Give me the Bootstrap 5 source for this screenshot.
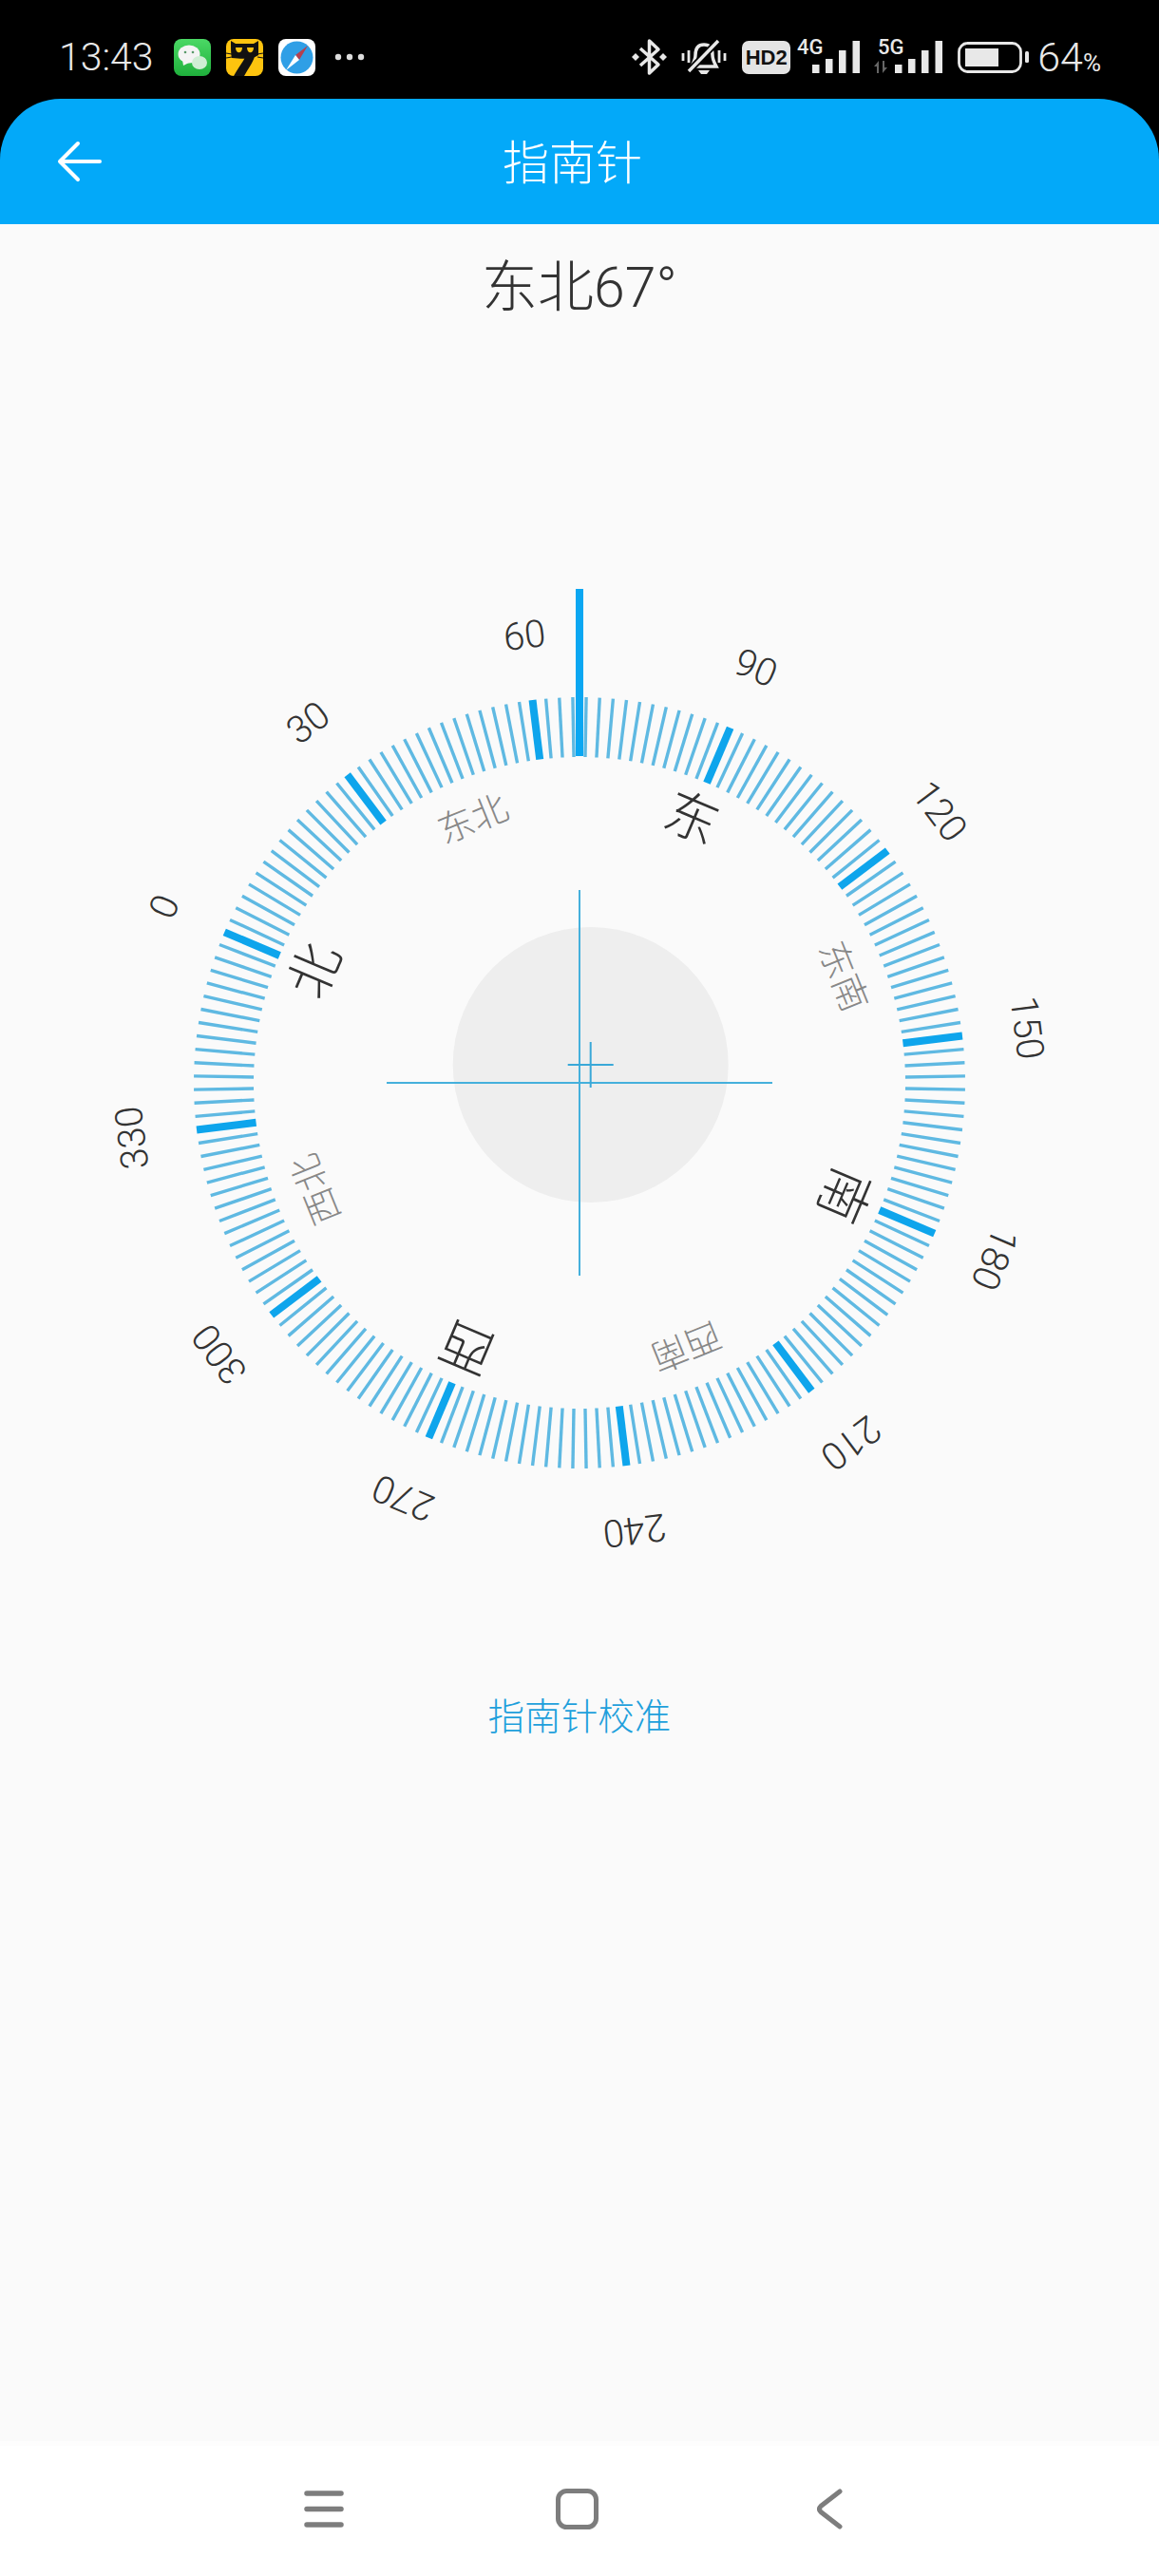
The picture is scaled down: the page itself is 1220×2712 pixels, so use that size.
<!DOCTYPE html>
<html lang="zh">
<head>
  <meta charset="UTF-8" />
  <meta name="viewport" content="width=device-width, initial-scale=1.0"/>
  <title>指南针</title>
  <link href="https://cdn.jsdelivr.net/npm/bootstrap@5.3.3/dist/css/bootstrap.min.css" rel="stylesheet"/>
  <style>
    body { background: #000; font-family: Roboto, "Noto Sans CJK SC", sans-serif; font-weight: 300; }
    .status-strip { height: 104px; padding: 16px 61px 0 62px; color: #e8e8e8; }
    .status-time { font-size: 41px; line-height: 1; margin-right: 21px; }
    .status-pct { font-size: 43px; line-height: 1; margin-left: 9px; }
    .status-pct small { font-size: 26px; font-weight: 400; }
    .gap-16 { margin-left: 16px; }
    .gap-20 { margin-left: 20px; }
    .gap-15 { margin-left: 15px; }
    .gap-14 { margin-left: 14px; }
    .gap-7 { margin-left: 7px; }
    .hd-chip { width: 51px; height: 35px; border-radius: 7px; background: #e4e4e4; color: #111; font-size: 22px; font-weight: 700; font-family: "Liberation Sans", sans-serif; }
    .app-bar { height: 132px; padding: 0 0 0 60px; background: #03a9f9; border-radius: 64px 64px 0 0; flex-wrap: nowrap; justify-content: flex-start; }
    .app-title { font-size: 49px; line-height: 1; margin-left: 422px; padding: 4px 0 0; color: #fff; }
    .compass-page { background: #fafafa; }
    .heading-text { font-size: 59px; line-height: 67px; font-weight: 300; color: #333; margin: 33px 0 264px; }
    .compass-svg { width: 1220px; height: 1080px; }
    .deg-label { font-size: 40px; fill: #333; text-anchor: middle; }
    .dir-main { font-size: 56px; fill: #333; text-anchor: middle; }
    .dir-sub { font-size: 38px; fill: #888; text-anchor: middle; }
    .calibrate-btn { font-size: 38.6px; line-height: 46px; color: #1ea0dc; margin-top: 105px; padding: 0; border: 0; font-weight: 300; text-decoration: none; }
    .sys-nav { height: 142px; background: #fff; border-top: 5px solid #fdfdfd; padding: 0 0 5px 320px; }
    .nav-home { margin-left: 223px; }
    .nav-back { margin-left: 230px; }
  </style>
</head>
<body class="d-flex flex-column vh-100 overflow-hidden">

  <!-- status bar -->
  <div class="status-strip d-flex align-items-center flex-shrink-0">
    <span class="status-time">13:43</span>
    <svg width="39" height="39" viewBox="0 0 39 39">
      <defs><linearGradient id="wx" x1="0" y1="0" x2="0" y2="1"><stop offset="0" stop-color="#4bd865"/><stop offset="1" stop-color="#1fb03c"/></linearGradient></defs>
      <rect width="39" height="39" rx="8" fill="url(#wx)"/>
      <ellipse cx="16" cy="16" rx="11.500" ry="9.500" fill="#f4f4f4"/>
      <path d="M9 22 L10 28 L16 25 Z" fill="#f4f4f4"/>
      <ellipse cx="27" cy="25" rx="8" ry="7" fill="#cfeed4"/>
      <circle cx="12" cy="14" r="1.300" fill="#5a9a6a"/><circle cx="20" cy="14" r="1.300" fill="#5a9a6a"/>
    </svg>
    <svg width="39" height="39" viewBox="0 0 39 39" class="gap-16">
      <rect width="39" height="39" rx="8" fill="#fdc40f"/>
      <path d="M5 2 L10 5 H29 L34 2 V17 C30 20 22 22 6 20 C5 16 5 8 5 2 Z" fill="#111"/>
      <path d="M30 14 C32 20 24 30 19 39 H8 C13 30 18 24 20 19 Z" fill="#111"/>
      <path d="M10 9 C10 16 17 16 17 9 Z M22 9 C22 16 29 16 29 9 Z" fill="#fdc40f"/>
      <path d="M0 15 L6 16 M0 20 L6 19 M33 16 L39 15 M33 19 L39 20" stroke="#111" stroke-width="1.200"/>
    </svg>
    <svg width="39" height="39" viewBox="0 0 39 39" class="gap-16">
      <rect width="39" height="39" rx="8" fill="#fff"/>
      <circle cx="19.500" cy="19.500" r="17" fill="#2f9fe6"/>
      <path d="M18 17 L31 7 L22 22 Z" fill="#b5404f"/>
      <path d="M18 17 L8 33 L22 22 Z" fill="#fff"/>
    </svg>
    <svg width="32" height="8" viewBox="0 0 32 8" class="gap-20">
      <circle cx="4" cy="4" r="3.200" fill="#ddd"/><circle cx="16" cy="4" r="3.200" fill="#ddd"/><circle cx="28" cy="4" r="3.200" fill="#ddd"/>
    </svg>

    <div class="ms-auto d-flex align-items-center">
      <svg width="37" height="42" viewBox="0 0 37 42">
        <path d="M9 12 L28 29 L18.500 38 V4 L28 13 L9 30" fill="none" stroke="#e8e8e8" stroke-width="3.500" stroke-linejoin="round"/>
        <path d="M4 17 L8 21 L4 25 L0 21 Z M33 17 L37 21 L33 25 L29 21 Z" fill="#e8e8e8"/>
      </svg>
      <svg width="48" height="42" viewBox="0 0 48 42" class="gap-15">
        <path d="M24 8 C17 8 15 13 15 19 C15 24 13 27 11 31 H37 C35 27 33 24 33 19 C33 13 31 8 24 8 Z" fill="none" stroke="#e8e8e8" stroke-width="3.500"/>
        <path d="M18 35 H30 L27 39 H21 Z" fill="#e8e8e8"/>
        <path d="M8 36 L39 4" stroke="#000" stroke-width="7"/>
        <path d="M8 36 L39 4" stroke="#e8e8e8" stroke-width="3.500"/>
        <path d="M2 17 V25 M8 14 V27 M46 17 V25 M40 14 V27" stroke="#e8e8e8" stroke-width="2.800"/>
      </svg>
      <span class="d-inline-flex align-items-center justify-content-center hd-chip gap-16">HD2</span>
      <svg width="66" height="54" viewBox="0 -10 66 54" class="gap-7">
        <text x="0" y="14" font-family="Roboto" font-size="22" font-weight="500" fill="#e8e8e8">4G</text>
        <path d="M16 25 h7.500 v9 h-7.500 Z M30 19 h7.500 v15 h-7.500 Z M44 10 h7.500 v24 h-7.500 Z M58.500 0 h7.500 v34 h-7.500 Z" fill="#e8e8e8"/>
      </svg>
      <svg width="72" height="54" viewBox="0 -10 72 54" class="gap-15">
        <text x="4" y="14" font-family="Roboto" font-size="22" font-weight="500" fill="#e8e8e8">5G</text>
        <path d="M0 27 L5 21 V34 H3 V27 Z M9 21 H11 V28 H14 L9 34 Z" fill="#666"/>
        <path d="M22 25 h7.500 v9 h-7.500 Z M36 19 h7.500 v15 h-7.500 Z M50 10 h7.500 v24 h-7.500 Z M64.500 0 h7.500 v34 h-7.500 Z" fill="#e8e8e8"/>
      </svg>
      <svg width="75" height="33" viewBox="0 0 75 33" class="gap-16">
        <rect x="1.500" y="1.500" width="65" height="30" rx="9" fill="none" stroke="#e8e8e8" stroke-width="2.800"/>
        <rect x="8" y="7" width="35" height="19" fill="#e8e8e8"/>
        <rect x="71" y="10" width="4" height="12" rx="1.500" fill="#e8e8e8"/>
      </svg>
      <span class="status-pct">64<small>%</small></span>
    </div>
  </div>

  <!-- app bar -->
  <nav class="navbar app-bar flex-shrink-0">
    <svg width="47" height="44" viewBox="0 0 47 44">
      <path d="M45 22 H3 M22 3 L3 22 L22 41" fill="none" stroke="#fff" stroke-width="4" stroke-linecap="round" stroke-linejoin="round"/>
    </svg>
    <span class="navbar-brand app-title">指南针</span>
  </nav>

  <!-- compass -->
  <main class="compass-page flex-grow-1 d-flex flex-column align-items-center">
    <div class="heading-text">东北67°</div>
    <svg class="compass-svg d-block" viewBox="-610 -540 1220 1080">
      <circle cx="11.700" cy="-19" r="145" fill="#eee"/>
      <g id="ticks"></g>
      <rect x="-4" y="-520" width="8" height="176" fill="#0ba7f2"/>
      <path d="M0 -203 V203 M-203 0 H203" stroke="#45b0dc" stroke-width="2" fill="none"/>
      <path d="M11.700 -43 V5 M-12.300 -19 H35.700" stroke="#3aa8d8" stroke-width="2" fill="none"/>
      <g id="labels">
        <text class="deg-label" transform="rotate(-67) translate(0 -461)">0</text>
        <text class="deg-label" transform="rotate(-37) translate(0 -461)">30</text>
        <text class="deg-label" transform="rotate(-7) translate(0 -461)">60</text>
        <text class="deg-label" transform="rotate(23) translate(0 -461)">90</text>
        <text class="deg-label" transform="rotate(53) translate(0 -461)">120</text>
        <text class="deg-label" transform="rotate(83) translate(0 -461)">150</text>
        <text class="deg-label" transform="rotate(113) translate(0 -461)">180</text>
        <text class="deg-label" transform="rotate(143) translate(0 -461)">210</text>
        <text class="deg-label" transform="rotate(173) translate(0 -461)">240</text>
        <text class="deg-label" transform="rotate(203) translate(0 -461)">270</text>
        <text class="deg-label" transform="rotate(233) translate(0 -461)">300</text>
        <text class="deg-label" transform="rotate(263) translate(0 -461)">330</text>
        <text class="dir-main" transform="rotate(-67) translate(0 -283)">北</text>
        <text class="dir-sub" transform="rotate(-22) translate(0 -286)">东北</text>
        <text class="dir-main" transform="rotate(23) translate(0 -283)">东</text>
        <text class="dir-sub" transform="rotate(68) translate(0 -286)">东南</text>
        <text class="dir-main" transform="rotate(113) translate(0 -283)">南</text>
        <text class="dir-sub" transform="rotate(158) translate(0 -286)">西南</text>
        <text class="dir-main" transform="rotate(203) translate(0 -283)">西</text>
        <text class="dir-sub" transform="rotate(248) translate(0 -286)">西北</text>
      </g>
    </svg>
    <a href="#" class="btn btn-link calibrate-btn">指南针校准</a>
  </main>

  <!-- system nav -->
  <footer class="sys-nav d-flex align-items-center flex-shrink-0">
    <svg width="42" height="39" viewBox="0 0 42 39">
      <path d="M3 3 H39 M3 19.500 H39 M3 36 H39" stroke="#7d7d7d" stroke-width="5.500" stroke-linecap="round"/>
    </svg>
    <svg width="45" height="43" viewBox="0 0 45 43" class="nav-home">
      <rect x="2.500" y="2.500" width="40" height="38" rx="9" fill="none" stroke="#7d7d7d" stroke-width="5"/>
    </svg>
    <svg width="27" height="43" viewBox="0 0 27 43" class="nav-back">
      <path d="M24 3 L4 18.500 Q1 21.500 4 24.500 L24 40" fill="none" stroke="#7d7d7d" stroke-width="5" stroke-linecap="round"/>
    </svg>
  </footer>

  <script>
    // ring of ticks, one every 2 degrees, heavy one every 30 degrees of scale
    const ticks = document.getElementById("ticks");
    for (let a = -67; a < 293; a += 2) {
      const heavy = (a + 67) % 30 === 0;
      const line = document.createElementNS("http://www.w3.org/2000/svg", "line");
      line.setAttribute("y1", -406);
      line.setAttribute("y2", -343);
      line.setAttribute("stroke", heavy ? "#0ea5ec" : "#5fb9e2");
      line.setAttribute("stroke-width", heavy ? 8 : 3.4);
      line.setAttribute("transform", `rotate(${a})`);
      ticks.appendChild(line);
    }
  </script>
  <script src="https://cdn.jsdelivr.net/npm/bootstrap@5.3.3/dist/js/bootstrap.bundle.min.js"></script>
</body>
</html>
